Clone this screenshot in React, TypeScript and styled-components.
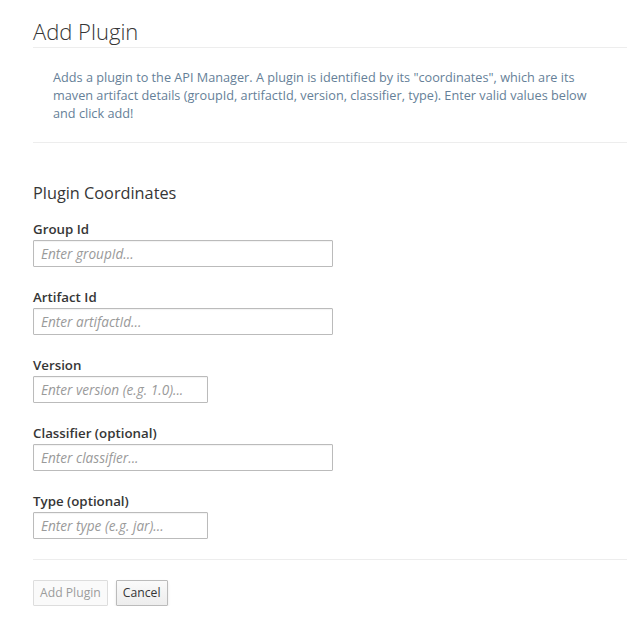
import React from "react";
import styled, { createGlobalStyle } from "styled-components";

const Global = createGlobalStyle`
  html, body { margin: 0; padding: 0; background: #fff; }
  body {
    font-family: "Open Sans", "Liberation Sans", sans-serif;
    font-size: 13px;
    line-height: 1.5;
    color: #363636;
  }
  * { box-sizing: border-box; }
`;

const Page = styled.div`
  padding: 0 0 0 33px;
`;

const Header = styled.div`
  border-bottom: 1px solid #ededed;
  padding-top: 17px;
  padding-bottom: 2px;
`;

const Title = styled.h1`
  margin: 0;
  font-size: 22px;
  font-weight: 300;
  line-height: 28px;
  color: #363636;
`;

const Intro = styled.div`
  border-bottom: 1px solid #ededed;
  padding: 20px 20px 20px 20px;
`;

const Description = styled.p`
  margin: 0;
  font-size: 12.7px;
  line-height: 18px;
  color: #667f98;
  max-width: 560px;
`;

const Section = styled.div`
  padding-top: 39px;
`;

const SectionTitle = styled.h3`
  margin: 0 0 15px 0;
  font-size: 16.3px;
  font-weight: 400;
  line-height: 22px;
  color: #363636;
`;

const Field = styled.div`
  display: flex;
  flex-direction: column;
  margin-bottom: 20px;
`;

const Label = styled.label`
  font-weight: 600;
  font-size: 13.3px;
  line-height: 20px;
  margin-bottom: 1px;
  color: #363636;
`;

const Input = styled.input<{ $w: number }>`
  width: ${(p) => p.$w}px;
  height: 27px;
  border: 1px solid #bbb;
  border-radius: 1px;
  padding: 2px 7px;
  font-family: "Open Sans", "Liberation Sans", sans-serif;
  font-size: 13.6px;
  color: #363636;
  background: #fff;
  box-shadow: inset 0 1px 1px rgba(3, 3, 3, 0.05);
  outline: none;
  &::placeholder {
    color: #9a9a9a;
    font-style: italic;
  }
`;

const Footer = styled.div`
  border-top: 1px solid #ededed;
  margin-top: 1px;
  padding-top: 20px;
  display: flex;
  gap: 8px;
`;

const Button = styled.button<{ $disabled?: boolean }>`
  font-family: "Open Sans", "Liberation Sans", sans-serif;
  font-size: 12.2px;
  line-height: 20px;
  height: 26px;
  padding: 0 6px;
  border-radius: 1px;
  border: 1px solid ${(p) => (p.$disabled ? "#ddd" : "#bbb")};
  color: ${(p) => (p.$disabled ? "#9c9c9c" : "#363636")};
  background: ${(p) =>
    p.$disabled ? "#fafafa" : "linear-gradient(to bottom, #fafafa 0%, #ededed 100%)"};
  box-shadow: ${(p) => (p.$disabled ? "none" : "0 2px 3px rgba(3,3,3,0.1)")};
  cursor: ${(p) => (p.$disabled ? "default" : "pointer")};
`;

const fields = [
  { label: "Group Id", ph: "Enter groupId...", w: 300 },
  { label: "Artifact Id", ph: "Enter artifactId...", w: 300 },
  { label: "Version", ph: "Enter version (e.g. 1.0)...", w: 175 },
  { label: "Classifier (optional)", ph: "Enter classifier...", w: 300 },
  { label: "Type (optional)", ph: "Enter type (e.g. jar)...", w: 175 },
];

export default function App() {
  return (
    <>
      <Global />
      <Page>
        <Header>
          <Title>Add Plugin</Title>
        </Header>
        <Intro>
          <Description>
            Adds a plugin to the API Manager. A plugin is identified by its "coordinates", which are its
            maven artifact details (groupId, artifactId, version, classifier, type). Enter valid values below
            and click add!
          </Description>
        </Intro>
        <Section>
          <SectionTitle>Plugin Coordinates</SectionTitle>
          {fields.map((f) => (
            <Field key={f.label}>
              <Label>{f.label}</Label>
              <Input $w={f.w} placeholder={f.ph} />
            </Field>
          ))}
        </Section>
        <Footer>
          <Button $disabled disabled>
            Add Plugin
          </Button>
          <Button>Cancel</Button>
        </Footer>
      </Page>
    </>
  );
}
